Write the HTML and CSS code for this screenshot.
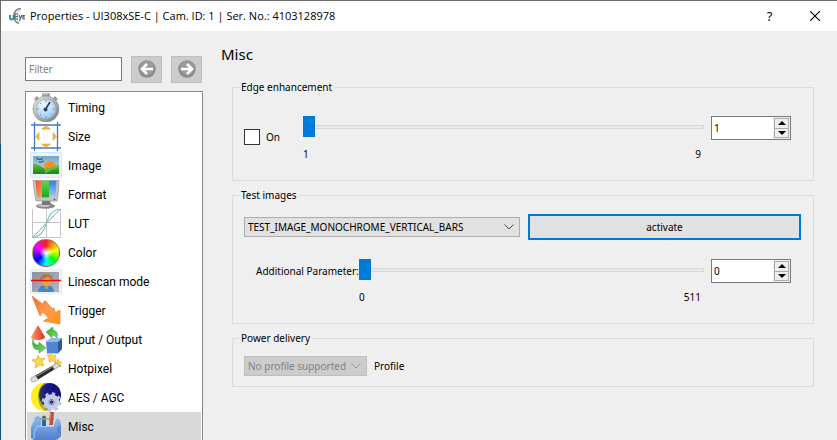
FILE: index.html
```html
<!DOCTYPE html>
<html lang="en">
<head>
<meta charset="utf-8">
<title>Properties - UI308xSE-C</title>
<link rel="stylesheet" href="styles.css">
</head>
<body>
<div class="window">
  <header class="titlebar">
    <svg class="app-icon" viewBox="0 0 16 16" aria-hidden="true">
      <path d="M12 .500Q5 1 5 8q0 6 5 7.500" fill="none" stroke="#858585" stroke-width="1.600"/>
      <path d="M12 1Q8 3 8 8t2 7" fill="none" stroke="#bbb"/>
      <path d="M1 7v3q0 1.500 1.700 1.500T4.500 10V7" fill="none" stroke="#268c9b" stroke-width="1.800"/>
      <path d="M9 6H6v5h3M6 8.500h3M10 7l1.500 3.500L13 7M11.500 10l-1 3M16 7.500h-2v3.500h2M14 9h2" fill="none" stroke="#4e6b70" stroke-width="1.200"/>
    </svg>
    <h1 class="title">Properties - UI308xSE-C | Cam. ID: 1 | Ser. No.: 4103128978</h1>
    <button class="caption-button" aria-label="Help">?</button>
    <button class="caption-button" aria-label="Close">
      <svg class="close-icon" viewBox="0 0 10 10"><path d="M0 0l10 10M10 0L0 10" stroke="#000" stroke-width="1.1"/></svg>
    </button>
  </header>
  <div class="content">
    <aside class="sidebar">
      <div class="toolbar">
        <input class="filter" type="text" placeholder="Filter" aria-label="Filter">
        <button class="nav-button" aria-label="Back" disabled>
          <svg class="nav-icon" viewBox="0 0 18 18"><circle cx="9" cy="9" r="8.7" fill="#8c8c8c"/><circle cx="9" cy="8" r="7" fill="#9b9b9b"/><path d="M15 9H5M9 4L4 9l5 5" fill="none" stroke="#fff" stroke-width="2.6"/></svg>
        </button>
        <button class="nav-button" aria-label="Forward" disabled>
          <svg class="nav-icon" viewBox="0 0 18 18"><circle cx="9" cy="9" r="8.7" fill="#8c8c8c"/><circle cx="9" cy="8" r="7" fill="#9b9b9b"/><path d="M3 9h10M9 4l5 5-5 5" fill="none" stroke="#fff" stroke-width="2.6"/></svg>
        </button>
      </div>
      <nav class="list">
        <a class="item" href="#timing">
          <svg class="icon" viewBox="0 0 32 29">
            <defs>
              <radialGradient id="dial" cx=".4" cy=".3" r=".8"><stop offset="0" stop-color="#f4fbff"/><stop offset="1" stop-color="#8ebff2"/></radialGradient>
              <linearGradient id="metal" x2="1" y2="1"><stop offset="0" stop-color="#eee"/><stop offset="1" stop-color="#777"/></linearGradient>
            </defs>
            <rect x="12" y="0" width="8" height="4" rx="1.5" fill="#999"/><path d="M13 1h5" stroke="#ddd"/>
            <path d="M4 6l3-3 3 3-3 3zM28 6l-3-3-3 3 3 3z" fill="#999"/>
            <circle cx="16" cy="16" r="13" fill="url(#metal)" stroke="#888" stroke-width=".6"/>
            <circle cx="16" cy="16" r="10" fill="url(#dial)" stroke="#8aa" stroke-width=".7"/>
            <path d="M16 7v2M16 23v2M7 16h2M23 16h2M10 10l1 1M10 22l1-1M22 22l-1-1" stroke="#7190b5"/>
            <path d="M15 17l5-8" stroke="#234" stroke-width="1.5"/><circle cx="15.5" cy="16.500" r="2" fill="#25435f"/>
          </svg>Timing</a>
        <a class="item" href="#size">
          <svg class="icon" viewBox="0 0 32 29">
            <path d="M4.500 0v29M27.500 0v29M1 3h30M1 26h30" stroke="#4478c4" stroke-width="1.3"/>
            <path d="M16 3.500l4.500 3.700h-9zM16 26l4.500-4h-9zM5.500 14.500L9 10.500v8zM26.500 14.500L23 10.500v8z" fill="#edbd3c" stroke="#d39e25" stroke-width=".5"/>
          </svg>Size</a>
        <a class="item" href="#image">
          <svg class="icon" viewBox="0 0 32 29">
            <defs>
              <linearGradient id="sky" x2="0" y2="1"><stop offset="0" stop-color="#6fa9cd"/><stop offset="1" stop-color="#d6e2cb"/></linearGradient>
              <linearGradient id="hill" x2="0" y2="1"><stop offset="0" stop-color="#67bd38"/><stop offset="1" stop-color="#17841d"/></linearGradient>
            </defs>
            <rect x=".5" y="1.500" width="31" height="25" rx="1" fill="#e8f3fc" stroke="#d5e8f8"/>
            <rect x="3" y="5" width="26" height="18" fill="url(#sky)"/>
            <ellipse cx="20" cy="15" rx="6" ry="4.500" fill="#f98b2c"/>
            <path d="M3 13q6 0 12 5 7-1 14-4v9H3z" fill="url(#hill)"/><path d="M15 18q7-1 14-4v3q-8 1-14 6z" fill="#68bd35"/>
            <path d="M6 7.500l4 1 3-1M9 11l3 0 2-1" fill="none" stroke="#345" stroke-width="1"/>
          </svg>Image</a>
        <a class="item" href="#format">
          <svg class="icon" viewBox="0 0 32 29">
            <defs>
              <linearGradient id="red" x2="1" y2="1"><stop offset="0" stop-color="#f04d23"/><stop offset="1" stop-color="#ffa36d"/></linearGradient>
              <linearGradient id="green" x2="0" y2="1"><stop offset="0" stop-color="#65d34d"/><stop offset="1" stop-color="#1eaa27"/></linearGradient>
              <linearGradient id="blue" x2="0" y2="1"><stop offset="0" stop-color="#2e81df"/><stop offset="1" stop-color="#9dc8f5"/></linearGradient>
            </defs>
            <ellipse cx="15.500" cy="26" rx="9.500" ry="2.800" fill="#888"/><ellipse cx="14" cy="25.500" rx="6" ry="1.300" fill="#ccc"/>
            <path d="M12 20h8l1 5h-9z" fill="#777"/>
            <path d="M3 0h26q0 11-2 21H6Q4 12 3 0z" fill="#c4c4c4" stroke="#888" stroke-width=".6"/>
            <path d="M5.500 0.800H12V17.500H7.500Q6 9 5.500 0.800z" fill="url(#red)"/><path d="M12 0.800h7v16.500h-7z" fill="url(#green)"/><path d="M19 0.800h7.500q0 8-1.500 16h-6z" fill="url(#blue)"/>
            <circle cx="24.500" cy="19.500" r=".8" fill="#444"/>
          </svg>Format</a>
        <a class="item" href="#lut">
          <svg class="icon" viewBox="0 0 32 29">
            <path d="M2.500 0v28.500h28V0M16.500 0v28M2.500 13.500h28" fill="none" stroke="#c5c5c5"/>
            <path d="M2.500 28.500L30.500 0" stroke="#999"/>
            <path d="M2.500 28.500C12 27 14 21 16.500 14S21 1 30.500 0" fill="none" stroke="#6cc6ca" stroke-width="1.1"/>
          </svg>LUT</a>
        <a class="item" href="#color"><span class="wheel"></span>Color</a>
        <a class="item" href="#linescan">
          <svg class="icon" viewBox="0 0 32 29">
            <defs><linearGradient id="slate" x2="1" y2="1"><stop offset="0" stop-color="#8d90a0"/><stop offset="1" stop-color="#b4b6c0"/></linearGradient></defs>
            <rect x=".5" y="2.500" width="31" height="24" fill="#e8f3fc" stroke="#dcecfa"/>
            <rect x="2" y="5" width="27" height="20" fill="url(#slate)"/>
            <path d="M8 25q0-7 8-7t8 7z" fill="#4386cf"/><path d="M14 17h5l-1 5h-3z" fill="#d9913a"/>
            <ellipse cx="16.500" cy="13" rx="5" ry="6" fill="#e7a54b"/><path d="M10.500 14q-1-7 6-7t6 7q-2-3-5-4-3 2-5 2z" fill="#b07a35"/>
            <path d="M1 13.500h30" stroke="#f00" stroke-width="1.500"/>
          </svg>Linescan mode</a>
        <a class="item" href="#trigger">
          <svg class="icon" viewBox="0 0 32 29">
            <defs><linearGradient id="bolt" x2="1" y2="1"><stop offset="0" stop-color="#f1672c"/><stop offset=".5" stop-color="#ff9c50"/><stop offset="1" stop-color="#ff9212"/></linearGradient></defs>
            <path d="M2 0l10.500 8L15 4.500l7.500 8.500 1-1.500 2 5 4.500-2.500v14L13.500 25l5-3-5.500-6-3 4z" fill="url(#bolt)" stroke="#e77b31" stroke-width=".7"/>
          </svg>Trigger</a>
        <a class="item" href="#io">
          <svg class="icon" viewBox="0 0 32 29">
            <defs>
              <linearGradient id="cone"><stop offset="0" stop-color="#ff9a73"/><stop offset="1" stop-color="#d63216"/></linearGradient>
              <linearGradient id="arrow" x2="1" y2="1"><stop offset="0" stop-color="#2cab32"/><stop offset="1" stop-color="#83db65"/></linearGradient>
            </defs>
            <path d="M8 0l7 12q-1 3-7 3t-7-3z" fill="url(#cone)"/>
            <path d="M16 7l7-5v3q6 1 4 8-2-3-5-3v3z" fill="url(#arrow)" stroke="#3a9c35" stroke-width=".5"/>
            <path d="M3 14q0 6 6 6v-3l7 6-7 5v-3Q1 25 3 14z" fill="url(#arrow)" stroke="#3a9c35" stroke-width=".5"/>
            <path d="M16 16l5-3h11l-4 4H16z" fill="#8bbaf0"/><path d="M16 17h12v11.500H17z" fill="#5584d1"/><path d="M28 17l4-4v11l-4 4.500z" fill="#2d57a4"/>
          </svg>Input / Output</a>
        <a class="item" href="#hotpixel">
          <svg class="icon" viewBox="0 0 32 29">
            <path d="M8 1l2 4 5-1-3 4 2 4-4-1-5 3 1-5-4-3 5-1zM21-1l2 3 3-1-1 3 1 4-4-1-3 1v-4l-2-3 3 0zM28 5l1 3 3 0-2 2 1 3-3-1-2 2 0-3-2-2 3-1z" fill="#ffd64a" stroke="#dba51c" stroke-width=".6"/>
            <path d="M1 24L27 9l3 3L4 28q-4 0-3-4z" fill="#292929"/>
            <path d="M1 24l4-2.500 3.500 4.200L4 28q-4 0-3-4zM22 12l5-3 3 3-5.500 3.300z" fill="#ddd" stroke="#999" stroke-width=".5"/>
            <path d="M6 22.500L22 13" stroke="#888" stroke-width="1.200"/>
          </svg>Hotpixel</a>
        <a class="item" href="#aes">
          <svg class="icon" viewBox="0 0 32 29">
            <defs><linearGradient id="night"><stop offset="0" stop-color="#393b47"/><stop offset=".35" stop-color="#16168b"/><stop offset="1" stop-color="#111172"/></linearGradient></defs>
            <ellipse cx="14" cy="14" rx="13" ry="14" fill="#ffed20"/><path d="M14 0Q8 5 8 14t7 14l3-1V0z" fill="#a5a12e"/>
            <ellipse cx="20" cy="12" rx="11" ry="12" fill="url(#night)"/>
            <circle cx="21.500" cy="19" r="8.500" fill="none" stroke="#b9bedb" stroke-width="2.600" stroke-dasharray="3.340 3.340"/>
            <circle cx="21.500" cy="19" r="5.300" fill="none" stroke="#c7cce6" stroke-width="5"/>
            <circle cx="21.500" cy="19" r="2.200" fill="#28296f" stroke="#9da3c9" stroke-width="1.200"/>
          </svg>AES / AGC</a>
        <a class="item selected" href="#misc" aria-current="page">
          <svg class="icon" viewBox="0 0 32 29">
            <defs><linearGradient id="box" x2="0" y2="1"><stop offset="0" stop-color="#91b8ec"/><stop offset="1" stop-color="#4f7fcc"/></linearGradient></defs>
            <path d="M4 14V9q0-4 4-5l3 2v8z" fill="#7ea9e3"/>
            <path d="M12 5q2-3 4 0v10h-4z" fill="#27699d"/><path d="M10 7h14" stroke="#b6a34f" stroke-width="1.500"/>
            <path d="M20 0h4l-1 13h-4z" fill="#bd5043"/><path d="M20.500 1l-1 11" stroke="#e58c7d"/>
            <path d="M1 26V15q2-6 6-9l3 2q-3 3-3 6h17q1-5 3-8l3 2q1 3 1 7v9l-5 4H4z" fill="url(#box)"/>
            <path d="M4 27q-1-7 3-12.500h17" fill="none" stroke="#a9caf5"/><path d="M27 16l4-3v11l-4 4z" fill="#5a88d0"/>
          </svg>Misc</a>
      </nav>
    </aside>
    <main class="page">
      <h2 class="heading">Misc</h2>
      <fieldset class="group edge">
        <legend>Edge enhancement</legend>
        <label class="check"><input type="checkbox">On</label>
        <div class="scale">
          <input class="slider" type="range" min="1" max="9" value="1" aria-label="Edge enhancement">
          <div class="limits"><span>1</span><span>9</span></div>
        </div>
        <div class="spin">
          <input type="text" inputmode="numeric" value="1" aria-label="Edge enhancement value">
          <div class="steps">
            <button aria-label="Increase"><svg viewBox="0 0 8 4"><path d="M4 0l4 4H0z"/></svg></button>
            <button aria-label="Decrease"><svg viewBox="0 0 8 4"><path d="M4 4l4-4H0z"/></svg></button>
          </div>
        </div>
      </fieldset>
      <fieldset class="group">
        <legend>Test images</legend>
        <div class="choose">
          <div class="combo">
            <select aria-label="Test image"><option>TEST_IMAGE_MONOCHROME_VERTICAL_BARS</option></select>
            <svg class="chevron" viewBox="0 0 10 6"><path d="M.5.500L5 5 9.500.500"/></svg>
          </div>
          <button class="activate">activate</button>
        </div>
        <div class="parameter">
          <label for="parameter">Additional Parameter:</label>
          <div class="scale">
            <input class="slider" id="parameter" type="range" min="0" max="511" value="0">
            <div class="limits"><span>0</span><span>511</span></div>
          </div>
          <div class="spin">
            <input type="text" inputmode="numeric" value="0" aria-label="Additional parameter value">
            <div class="steps">
              <button aria-label="Increase"><svg viewBox="0 0 8 4"><path d="M4 0l4 4H0z"/></svg></button>
              <button aria-label="Decrease"><svg viewBox="0 0 8 4"><path d="M4 4l4-4H0z"/></svg></button>
            </div>
          </div>
        </div>
      </fieldset>
      <fieldset class="group power">
        <legend>Power delivery</legend>
        <div class="combo">
          <select id="profile" disabled><option>No profile supported</option></select>
          <svg class="chevron" viewBox="0 0 10 6"><path d="M.5.500L5 5 9.500.500"/></svg>
        </div>
        <label for="profile">Profile</label>
      </fieldset>
    </main>
  </div>
</div>
</body>
</html>
```
FILE: styles.css
```css
* {
  box-sizing: border-box;
}

body {
  margin: 0;
  background: linear-gradient(#6b6b6b 144px, #1b4f80 144px);
  color: #000;
  font: 10px/16px "Noto Sans", sans-serif;
}

button,
input,
select {
  margin: 0;
  padding: 0;
  border-radius: 0;
  color: inherit;
  font: inherit;
}

.window {
  display: flex;
  flex-direction: column;
  height: 100vh;
  padding: 1px 0 0 1px;
  overflow: hidden;
}

.titlebar {
  display: flex;
  flex: none;
  align-items: center;
  height: 30px;
  padding-left: 8px;
  background: #fff;
}

.app-icon {
  width: 16px;
  height: 16px;
  margin-right: 5px;
}

.title {
  flex: 1;
  margin: 0;
  font: 11px/16px "Open Sans", sans-serif;
  white-space: nowrap;
}

.caption-button {
  display: flex;
  align-items: center;
  justify-content: center;
  width: 45px;
  height: 30px;
  border: 0;
  background: none;
  font-size: 13px;
}

.close-icon {
  width: 10px;
  height: 10px;
}

.content {
  display: flex;
  flex: 1;
  min-height: 0;
  background: #efefef;
}

.sidebar {
  display: flex;
  flex: none;
  flex-direction: column;
  width: 178px;
  margin-left: 24px;
  padding-top: 25px;
}

.toolbar {
  display: flex;
  gap: 9px;
  margin-bottom: 8px;
  padding-right: 1px;
}

.filter {
  flex: 1;
  min-width: 0;
  height: 24px;
  margin-top: 1px;
  padding: 0 3px;
  border: 1px solid #7a7a7a;
  background: #fff;
}

.filter::placeholder {
  color: #808080;
}

.nav-button {
  display: flex;
  justify-content: center;
  width: 31px;
  height: 27px;
  padding-top: 3px;
  border: 1px solid #bfbfbf;
  background: #ccc;
}

.nav-icon {
  width: 18px;
  height: 18px;
}

.list {
  flex: 1;
  min-height: 0;
  padding: 1px 1px 0;
  overflow: hidden;
  border: 1px solid #828790;
  border-bottom: 0;
  background: #fff;
}

.item {
  display: flex;
  align-items: center;
  height: 29px;
  padding-left: 3px;
  color: #000;
  font-family: Roboto, sans-serif;
  font-size: 12px;
  text-decoration: none;
}

.selected {
  background: #d9d9d9;
}

.icon {
  flex: none;
  width: 32px;
  height: 29px;
  margin-right: 6px;
}

.wheel {
  width: 28px;
  height: 28px;
  margin: 0 8px 0 2px;
  border: 1px solid #7779;
  border-radius: 50%;
  background: radial-gradient(#fff, #fff0 35%), conic-gradient(#f02020, #ff0 75deg, #0f0 130deg, #0ff 180deg, #00f 230deg, #f0f 305deg, #f02020);
}

.page {
  flex: 1;
  min-width: 0;
  padding: 13px 23px 0 18px;
}

.heading {
  margin: 0 0 15px;
  font-size: 15px;
  font-weight: 400;
  line-height: 21px;
}

.group {
  min-width: 0;
  margin: 0 0 7px 11px;
  padding: 21px 12px 18px 11px;
  border: 1px solid #dcdcdc;
}

.group legend {
  margin-left: -5px;
  padding: 0 2px;
  line-height: 15px;
}

.edge {
  display: flex;
}

.check {
  display: flex;
  align-items: center;
  align-self: flex-start;
  gap: 6px;
  width: 59px;
  margin-top: 13px;
}

.check input {
  width: 16px;
  height: 16px;
  border: 1px solid #333;
  background: #fff;
  appearance: none;
}

.scale {
  flex: 1;
  min-width: 0;
}

.slider {
  display: block;
  width: 100%;
  height: 21px;
  background: none;
  appearance: none;
}

.slider::-webkit-slider-runnable-track {
  height: 4px;
  border: 1px solid #d6d6d6;
  background: #e7eaea;
}

.slider::-webkit-slider-thumb {
  width: 12px;
  height: 21px;
  margin: -10px 0 0 -1px;
  border-radius: 0;
  background: #007ad9;
  appearance: none;
}

.limits {
  display: flex;
  justify-content: space-between;
  margin-top: 9px;
  padding-right: 3px;
}

.spin {
  display: flex;
  width: 80px;
  height: 24px;
  margin: 0 10px 0 7px;
  border: 1px solid #7a7a7a;
  background: #efefef;
}

.spin input {
  flex: 1;
  min-width: 0;
  padding-left: 2px;
  border: 0;
  background: #fff;
}

.steps {
  display: flex;
  flex-direction: column;
  padding: 1px;
}

.steps button {
  display: flex;
  flex: 1;
  align-items: center;
  justify-content: center;
  width: 15px;
  border: 1px solid #acacac;
  background: #eee;
}

.steps button + button {
  border-top: 0;
}

.steps svg {
  width: 8px;
  height: 4px;
}

.group:has(.choose) {
  padding-top: 11px;
}

.choose {
  display: flex;
  align-items: center;
  gap: 8px;
  margin-bottom: 19px;
}

.combo {
  position: relative;
  flex: none;
}

.combo select {
  display: block;
  width: 276px;
  height: 20px;
  padding: 0 3px;
  border: 1px solid #adadad;
  background: #e1e1e1;
  appearance: none;
}

.combo select:disabled {
  border-color: #bfbfbf;
  background: #ccc;
  color: #838383;
  opacity: 1;
}

.chevron {
  position: absolute;
  top: 7px;
  right: 6px;
  width: 10px;
  height: 6px;
  fill: none;
  stroke: #444;
  pointer-events: none;
}

select:disabled + .chevron {
  stroke: #999;
}

.activate {
  flex: 1;
  height: 26px;
  border: 2px solid #0078d7;
  background: #e1e1e1;
}

.parameter {
  display: flex;
}

.parameter > label {
  width: 115px;
  padding: 4px 0 0 12px;
  white-space: nowrap;
}

.combo .power {
  width: 123px;
}

.power {
  display: flex;
  align-items: center;
  gap: 7px;
  padding-top: 10px;
  padding-bottom: 10px;
}

.power select {
  width: 123px;
}
```
